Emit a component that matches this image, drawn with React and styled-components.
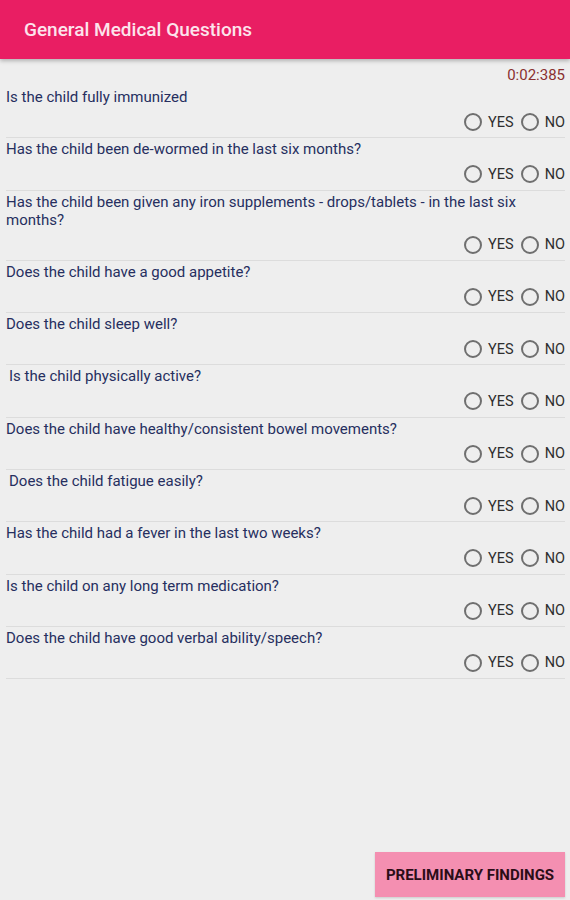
import React from "react";
import styled, { createGlobalStyle } from "styled-components";

const Global = createGlobalStyle`
  html, body { margin: 0; padding: 0; background: #eeeeee; }
  body { font-family: Roboto, "Noto Sans", sans-serif; }
  * { box-sizing: border-box; }
`;

const Page = styled.div`
  min-height: 900px;
  display: flex;
  flex-direction: column;
  background: #eeeeee;
`;

const Header = styled.header`
  height: 59px;
  background: #e91e63;
  display: flex;
  align-items: center;
  padding-left: 24px;
  box-shadow: 0 2px 4px rgba(0, 0, 0, 0.25);
`;

const Title = styled.h1`
  margin: 0;
  font-size: 19px;
  font-weight: 500;
  color: #fce4ec;
  letter-spacing: 0;
`;

const Timer = styled.div`
  height: 18px;
  margin-top: 7px;
  padding-right: 5px;
  text-align: right;
  font-size: 15px;
  line-height: 18px;
  color: #8a3030;
`;

const List = styled.div`
  display: flex;
  flex-direction: column;
  margin-top: 4px;
`;

const Row = styled.div`
  display: flex;
  flex-direction: column;
  padding: 2px 0 3.3px;
  margin-left: 6px;
  margin-right: 5px;
  border-bottom: 1.5px solid #dcdcdc;
  &:first-child { padding-top: 0; }
`;

const Question = styled.div`
  font-size: 15px;
  line-height: 18px;
  color: #262f60;
  padding-left: ${(p) => (p.$indent ? "3px" : "0")};
  padding-right: 40px;
`;

const Options = styled.div`
  height: 24px;
  margin-top: 4px;
  display: flex;
  justify-content: flex-end;
  align-items: center;
  gap: 7px;
`;

const Option = styled.label`
  display: flex;
  align-items: center;
  gap: 6px;
  font-size: 14.5px;
  color: #2e2e2e;
`;

const Circle = styled.span`
  width: 18px;
  height: 18px;
  border-radius: 50%;
  border: 2px solid #6f6f6f;
  display: inline-block;
`;

const Footer = styled.div`
  margin-top: auto;
  display: flex;
  justify-content: flex-end;
  padding: 0 5px 3px 0;
`;

const Button = styled.button`
  width: 190px;
  height: 45px;
  border: none;
  background: #f48fb1;
  color: #2b0d17;
  font-family: Roboto, sans-serif;
  font-weight: 700;
  font-size: 15px;
  letter-spacing: 0;
  box-shadow: 0 1px 2px rgba(0,0,0,0.15);
`;

const questions = [
  { t: "Is the child fully immunized" },
  { t: "Has the child been de-wormed in the last six months?" },
  { t: "Has the child been given any iron supplements - drops/tablets - in the last six months?" },
  { t: "Does the child have a good appetite?" },
  { t: "Does the child sleep well?" },
  { t: "Is the child physically active?", indent: true },
  { t: "Does the child have healthy/consistent bowel movements?" },
  { t: "Does the child fatigue easily?", indent: true },
  { t: "Has the child had a fever in the last two weeks?" },
  { t: "Is the child on any long term medication?" },
  { t: "Does the child have good verbal ability/speech?" },
];

export default function App() {
  return (
    <Page>
      <Global />
      <Header>
        <Title>General Medical Questions</Title>
      </Header>
      <Timer>0:02:385</Timer>
      <List>
        {questions.map((q, i) => (
          <Row key={i}>
            <Question $indent={q.indent}>{q.t}</Question>
            <Options>
              <Option><Circle />YES</Option>
              <Option><Circle />NO</Option>
            </Options>
          </Row>
        ))}
      </List>
      <Footer>
        <Button>PRELIMINARY FINDINGS</Button>
      </Footer>
    </Page>
  );
}
